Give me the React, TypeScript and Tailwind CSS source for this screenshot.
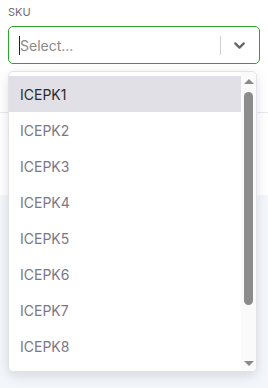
import { ChevronDown } from "lucide-react";

const SKUS = ["ICEPK1", "ICEPK2", "ICEPK3", "ICEPK4", "ICEPK5", "ICEPK6", "ICEPK7", "ICEPK8"];

function Scrollbar() {
  return (
    <div className="flex w-[15px] shrink-0 flex-col items-center bg-[#fafafa] pt-[7px] pb-[5px]">
      <span className="h-0 w-0 border-x-[5px] border-b-[5px] border-x-transparent border-b-[#8a8a8a]" />
      <span className="mt-[8px] h-[213px] w-[9px] rounded-full bg-[#8c8c8c]" />
      <span className="mt-auto h-0 w-0 border-x-[5px] border-t-[5px] border-x-transparent border-t-[#8a8a8a]" />
    </div>
  );
}

export default function App() {
  return (
    <div
      className="relative flex h-[388px] w-[268px] flex-col overflow-hidden bg-white"
      style={{ fontFamily: "Inter, 'Open Sans', sans-serif" }}
    >
      {/* page underneath */}
      <div className="flex h-[195px] shrink-0 flex-col bg-white px-2">
        <label className="mt-[5px] text-[11px] leading-[14px] text-[#6e6b7b]">SKU</label>
        <div className="mt-[7px] flex h-[38px] items-center rounded-[5px] border border-[#2aa52a] bg-white">
          <div className="flex flex-1 items-center pl-[10px]">
            <span className="h-[19px] w-px bg-[#222]" />
            <span className="text-[14px] text-[#8a8a8a]">Select...</span>
          </div>
          <span className="h-[19px] w-px bg-[#d0d0d0]" />
          <div className="flex w-[38px] items-center justify-center pr-[1px]">
            <ChevronDown className="h-[17px] w-[17px] text-[#666]" strokeWidth={3.2} />
          </div>
        </div>
        <div className="mt-[48px] -mx-2 h-px bg-[#e8e8ee]" />
      </div>
      <div className="flex-1 bg-[#f3f6fa]" />

      {/* dropdown menu */}
      <div className="absolute left-2 top-[71px] flex h-[301px] w-[249px] overflow-hidden rounded-[5px] border border-[#e2e2e8] bg-white shadow-[0_4px_12px_rgba(0,0,0,0.12)]">
        <ul className="flex-1 pt-[4px]">
          {SKUS.map((s, i) => (
            <li
              key={s}
              className={`flex h-[36px] items-center pl-[11px] text-[14px] ${
                i === 0 ? "bg-[#e1e0e6] text-[#2b2b2b]" : "text-[#7a7885]"
              }`}
            >
              {s}
            </li>
          ))}
        </ul>
        <Scrollbar />
      </div>
    </div>
  );
}
